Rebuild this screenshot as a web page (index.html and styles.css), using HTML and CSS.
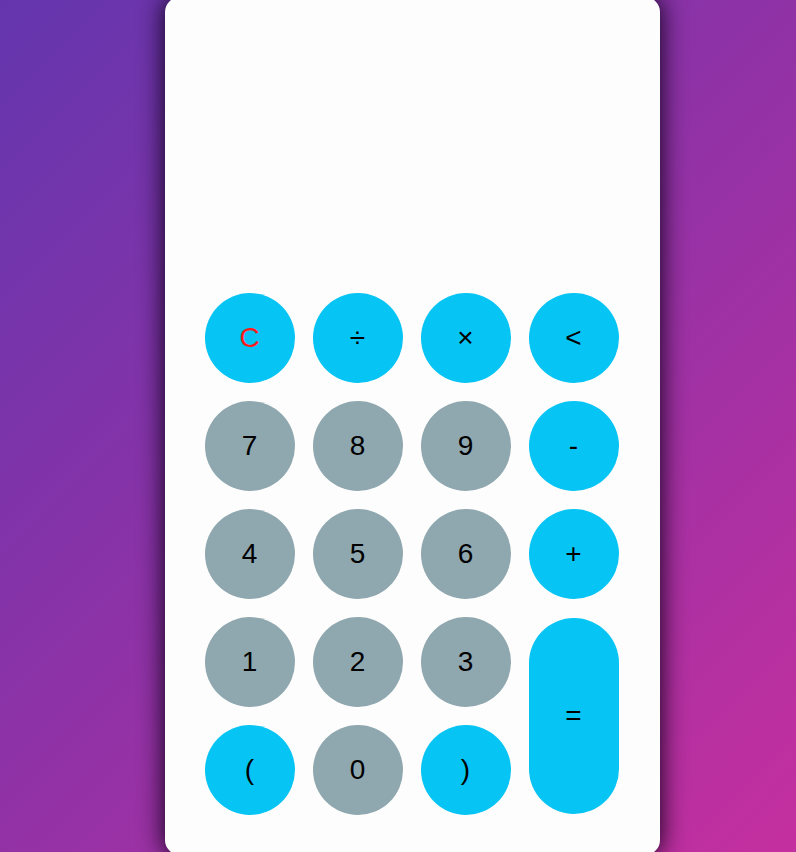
FILE: index.html
```html
<!DOCTYPE html>
<html>
<head>
<meta charset="utf-8">
<link rel="stylesheet" href="styles.css">
</head>
<body>
<div class="calc">
  <div class="display"></div>
  <div class="keys">
    <button class="key op clear">C</button>
    <button class="key op">÷</button>
    <button class="key op">×</button>
    <button class="key op">&lt;</button>
    <button class="key num">7</button>
    <button class="key num">8</button>
    <button class="key num">9</button>
    <button class="key op">-</button>
    <button class="key num">4</button>
    <button class="key num">5</button>
    <button class="key num">6</button>
    <button class="key op">+</button>
    <button class="key num">1</button>
    <button class="key num">2</button>
    <button class="key num">3</button>
    <button class="key op equals">=</button>
    <button class="key op">(</button>
    <button class="key num">0</button>
    <button class="key op">)</button>
  </div>
</div>
</body>
</html>
```
FILE: styles.css
```css
html, body {
  margin: 0;
  padding: 0;
  height: 100%;
  overflow: hidden;
}
body {
  background: linear-gradient(135deg, #6436ae 0%, #9132a6 50%, #c52f9f 100%);
  display: flex;
  align-items: center;
  justify-content: center;
  padding-left: 28px;
  box-sizing: border-box;
  font-family: "Liberation Sans", Arial, sans-serif;
}
.calc {
  flex: none;
  width: 495px;
  height: 858px;
  box-sizing: border-box;
  padding: 40px 41px 40px 40px;
  background: #fdfdfd;
  border-radius: 15px;
  box-shadow: 0 0 25px 2px rgba(10, 0, 20, 0.9);
  display: flex;
  flex-direction: column;
}
.display {
  height: 256px;
  flex: none;
}
.keys {
  display: grid;
  grid-template-columns: repeat(4, 90px);
  grid-template-rows: repeat(5, 90px);
  gap: 18px;
}
.key {
  border: none;
  margin: 0;
  padding: 0;
  width: 90px;
  height: 90px;
  border-radius: 50%;
  font-family: "Liberation Sans", Arial, sans-serif;
  font-size: 28px;
  color: #000;
  display: flex;
  align-items: center;
  justify-content: center;
}
.op {
  background: #06c4f3;
}
.num {
  background: #8fa7af;
}
.clear {
  color: #ff1a1a;
}
.equals {
  grid-row: span 2;
  height: 196px;
  align-self: center;
  border-radius: 45px;
}
```
